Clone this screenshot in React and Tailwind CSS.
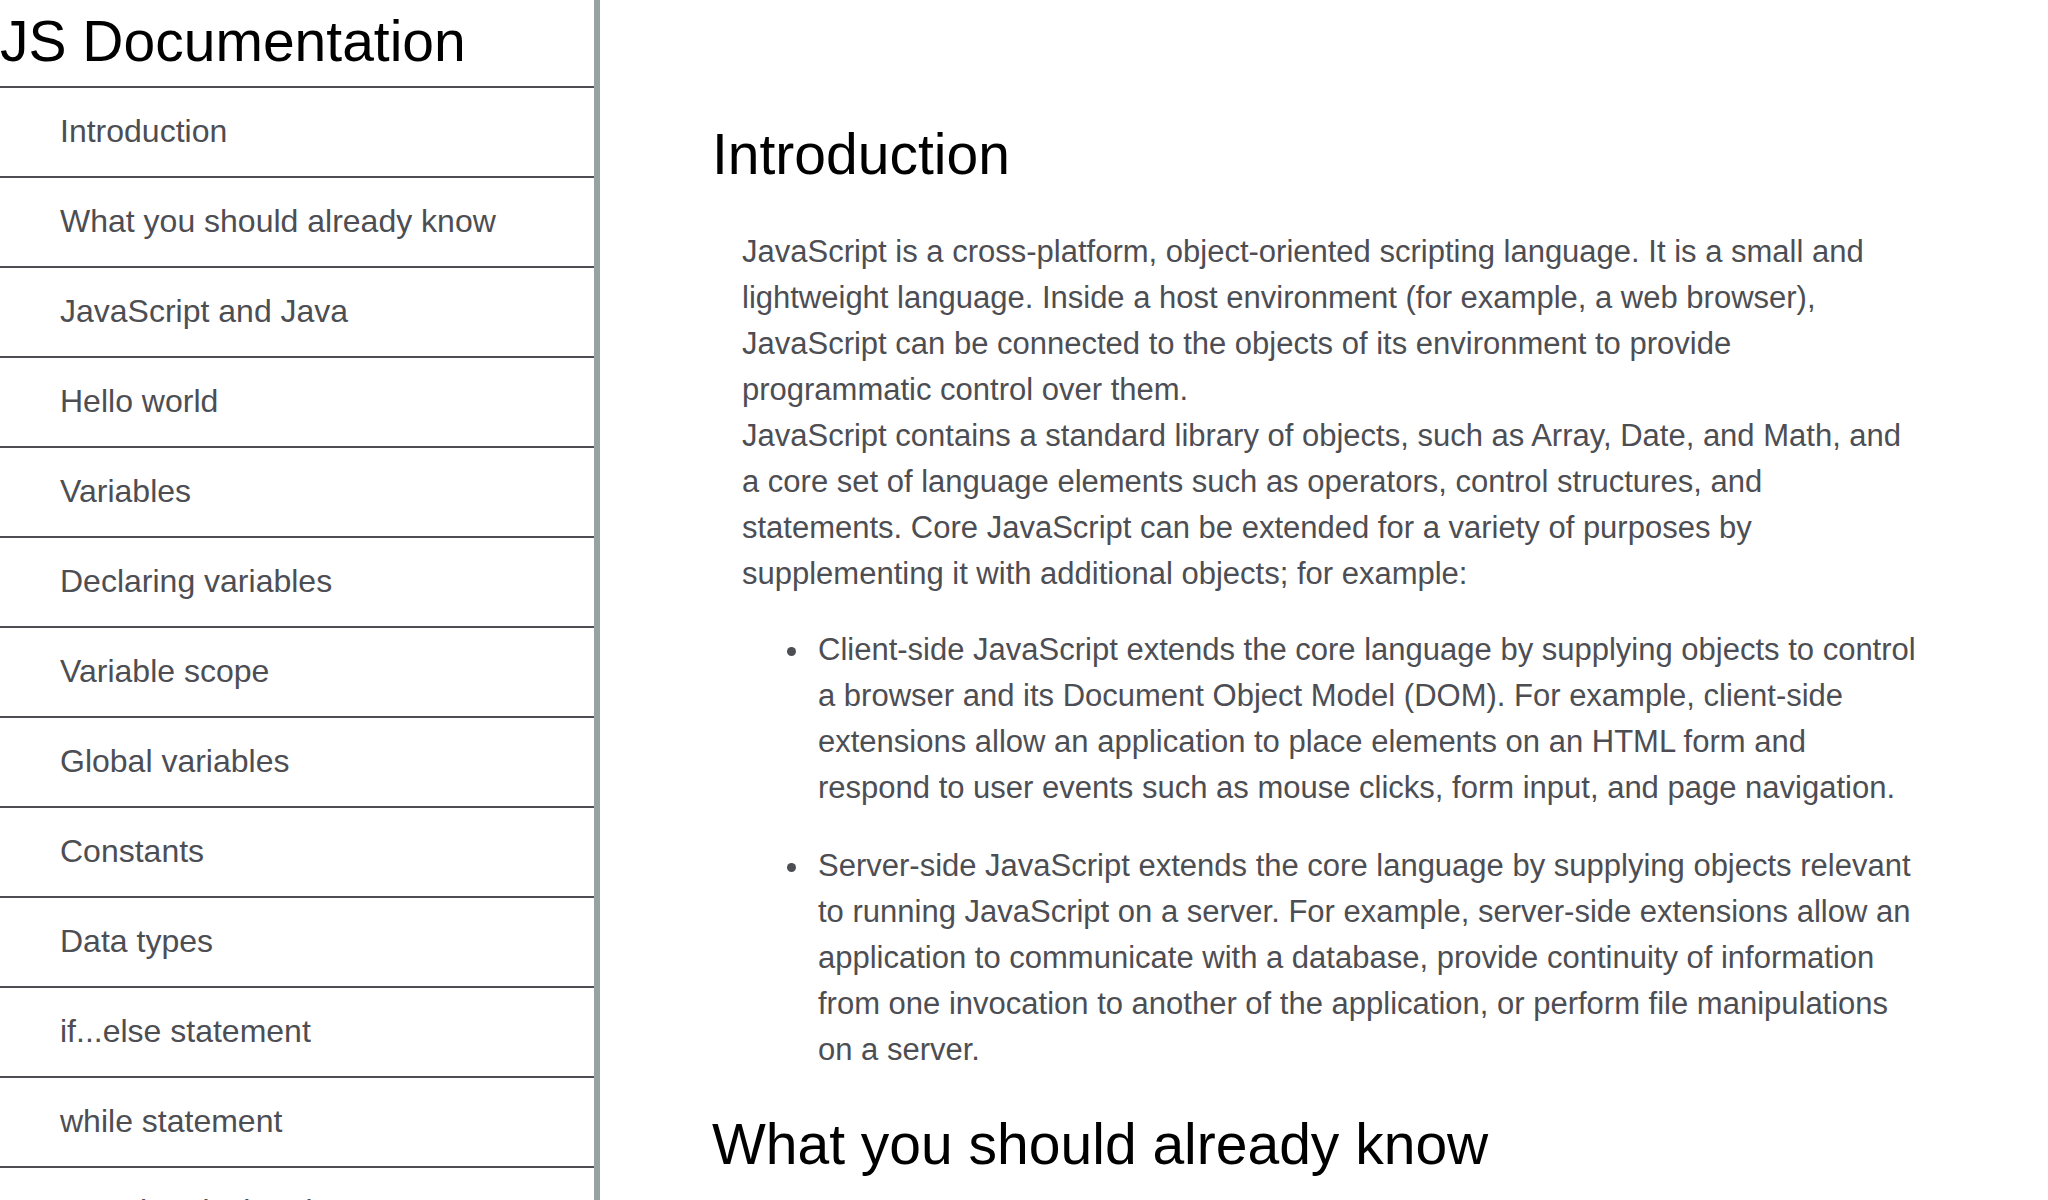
const navItems = [
  "Introduction",
  "What you should already know",
  "JavaScript and Java",
  "Hello world",
  "Variables",
  "Declaring variables",
  "Variable scope",
  "Global variables",
  "Constants",
  "Data types",
  "if...else statement",
  "while statement",
  "Function declarations",
];

const toId = (title) => title.replace(/ /g, "_");

export default function App() {
  return (
    <div className="flex h-screen overflow-hidden bg-white font-['Liberation_Sans',Arial,sans-serif] text-[#4d4e53]">
      <nav className="w-[600px] shrink-0 overflow-hidden border-r-6 border-[#97a3a2]">
        <h1 className="pt-1.5 pb-2.5 text-[57px] leading-[70px] text-black">JS Documentation</h1>
        <ul>
          {navItems.map((item) => (
            <li key={item} className="border-t-2 border-[#4d4e53]">
              <a href={`#${toId(item)}`} className="block pb-0.5 pl-15 text-[32px] leading-[86px]">
                {item}
              </a>
            </li>
          ))}
        </ul>
      </nav>
      <main className="min-w-0 flex-1 overflow-hidden pt-[119px] pr-32 pl-28">
        <section id="Introduction">
          <h2 className="text-[57px] leading-[70px] text-black">Introduction</h2>
          <div className="mt-10 ml-[30px] text-[31px] leading-[46px]">
            <p>
              JavaScript is a cross-platform, object-oriented scripting language. It is a small and
              lightweight language. Inside a host environment (for example, a web browser),
              JavaScript can be connected to the objects of its environment to provide programmatic
              control over them.
            </p>
            <p>
              JavaScript contains a standard library of objects, such as Array, Date, and Math, and
              a core set of language elements such as operators, control structures, and
              statements. Core JavaScript can be extended for a variety of purposes by
              supplementing it with additional objects; for example:
            </p>
            <ul className="mt-[30px] list-disc space-y-8 pl-[70px]">
              <li className="pl-1.5">
                Client-side JavaScript extends the core language by supplying objects to control a
                browser and its Document Object Model (DOM). For example, client-side extensions
                allow an application to place elements on an HTML form and respond to user events
                such as mouse clicks, form input, and page navigation.
              </li>
              <li className="pl-1.5">
                Server-side JavaScript extends the core language by supplying objects relevant to
                running JavaScript on a server. For example, server-side extensions allow an
                application to communicate with a database, provide continuity of information from
                one invocation to another of the application, or perform file manipulations on a
                server.
              </li>
            </ul>
          </div>
        </section>
        <section id="What_you_should_already_know">
          <h2 className="mt-9 text-[57px] leading-[70px] text-black">
            What you should already know
          </h2>
        </section>
      </main>
    </div>
  );
}
